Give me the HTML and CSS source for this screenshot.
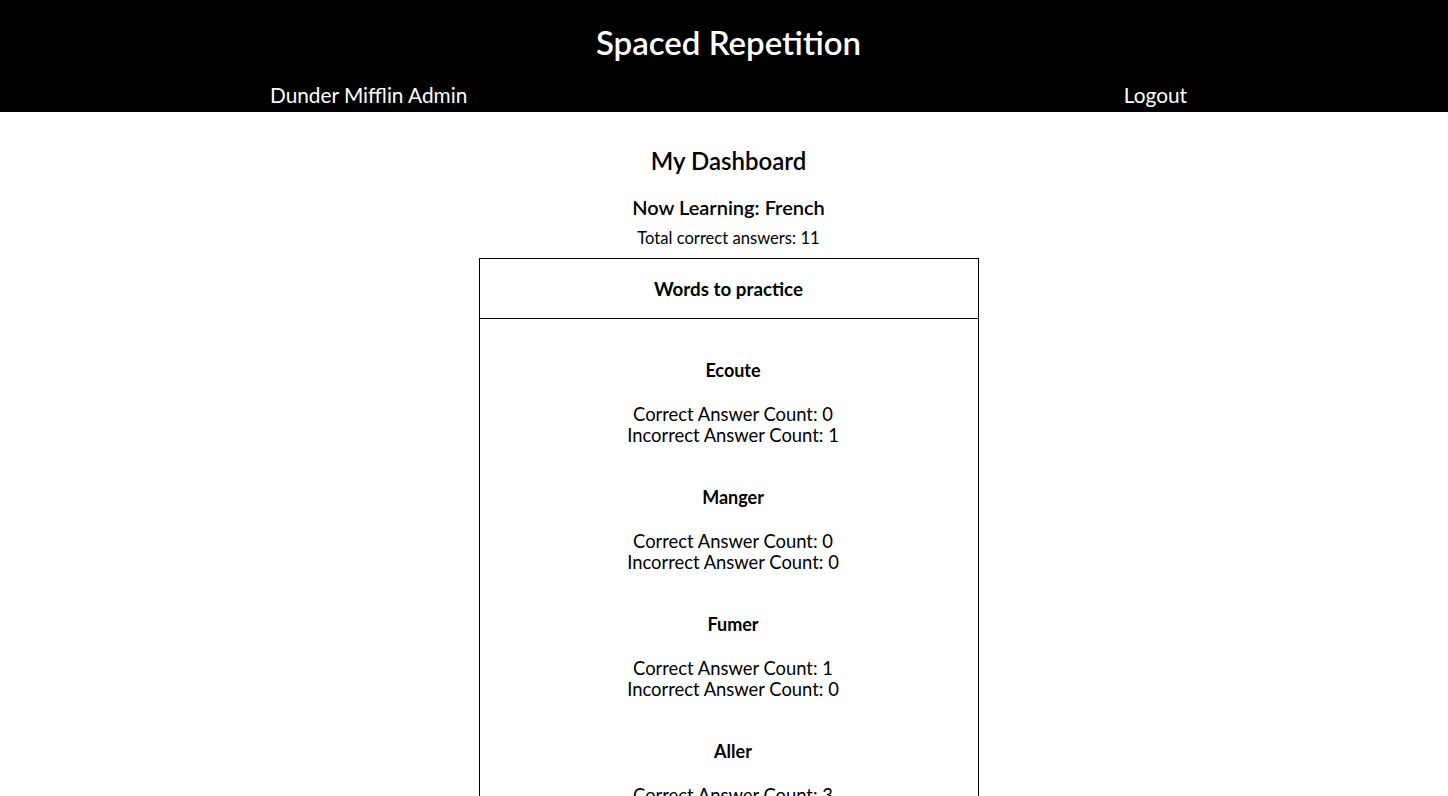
FILE: index.html
```html
<!DOCTYPE html>
<html lang="en">
<head>
<meta charset="utf-8">
<title>Spaced Repetition</title>
<link rel="stylesheet" href="styles.css">
</head>
<body>
<header class="site-header">
  <h1 class="site-title">Spaced Repetition</h1>
  <nav class="site-nav">
    <span class="nav-user">Dunder Mifflin Admin</span>
    <a class="nav-link" href="#">Logout</a>
  </nav>
</header>
<main class="dashboard">
  <h2 class="dash-title">My Dashboard</h2>
  <h3 class="dash-lang">Now Learning: French</h3>
  <p class="dash-total">Total correct answers: 11</p>
  <section class="words-box">
    <h4 class="words-head">Words to practice</h4>
    <ul class="words-list">
      <li class="word">
        <h5 class="word-name">Ecoute</h5>
        <p class="word-count">Correct Answer Count: 0</p>
        <p class="word-count">Incorrect Answer Count: 1</p>
      </li>
      <li class="word">
        <h5 class="word-name">Manger</h5>
        <p class="word-count">Correct Answer Count: 0</p>
        <p class="word-count">Incorrect Answer Count: 0</p>
      </li>
      <li class="word">
        <h5 class="word-name">Fumer</h5>
        <p class="word-count">Correct Answer Count: 1</p>
        <p class="word-count">Incorrect Answer Count: 0</p>
      </li>
      <li class="word">
        <h5 class="word-name">Aller</h5>
        <p class="word-count">Correct Answer Count: 3</p>
        <p class="word-count">Incorrect Answer Count: 0</p>
      </li>
    </ul>
  </section>
</main>
</body>
</html>
```
FILE: styles.css
```css
* { box-sizing: border-box; }
html, body { margin: 0; padding: 0; }
body {
  font-family: Lato, "Open Sans", sans-serif;
  color: #000;
  background: #fff;
  overflow: hidden;
  height: 796px;
}
.site-header {
  background: #000;
  color: #fff;
  padding: 23px 0 6px;
}
.site-title {
  margin: 0;
  padding-left: 9px;
  text-align: center;
  font-size: 33px;
  line-height: 38px;
  font-weight: 600;
}
.site-nav {
  margin-top: 23px;
  display: flex;
  justify-content: space-between;
  padding: 0 261px 0 270px;
  font-size: 20.8px;
  line-height: 22px;
}
.nav-link { color: #fff; text-decoration: none; }
.dashboard {
  display: flex;
  flex-direction: column;
  align-items: center;
  padding-top: 35px;
  padding-left: 9px;
}
.dash-title {
  margin: 0;
  font-size: 24px;
  line-height: 28px;
  font-weight: 600;
}
.dash-lang {
  margin: 20px 0 0;
  font-size: 20px;
  line-height: 24px;
  font-weight: 600;
}
.dash-total {
  margin: 9px 0 0;
  font-size: 16.6px;
  line-height: 20px;
}
.words-box {
  margin-top: 10px;
  width: 500px;
  border: 1px solid #000;
  text-align: center;
}
.words-head {
  margin: 0;
  height: 60px;
  display: flex;
  align-items: center;
  justify-content: center;
  border-bottom: 1px solid #000;
  font-size: 18.8px;
  font-weight: 700;
}
.words-list {
  list-style: none;
  margin: 0;
  padding: 40px 0 0 9px;
}
.word { height: 127px; }
.word-name {
  margin: 0 0 23px;
  font-size: 18px;
  line-height: 22px;
  font-weight: 700;
}
.word-count {
  margin: 0;
  font-size: 18.4px;
  line-height: 21px;
}
```
